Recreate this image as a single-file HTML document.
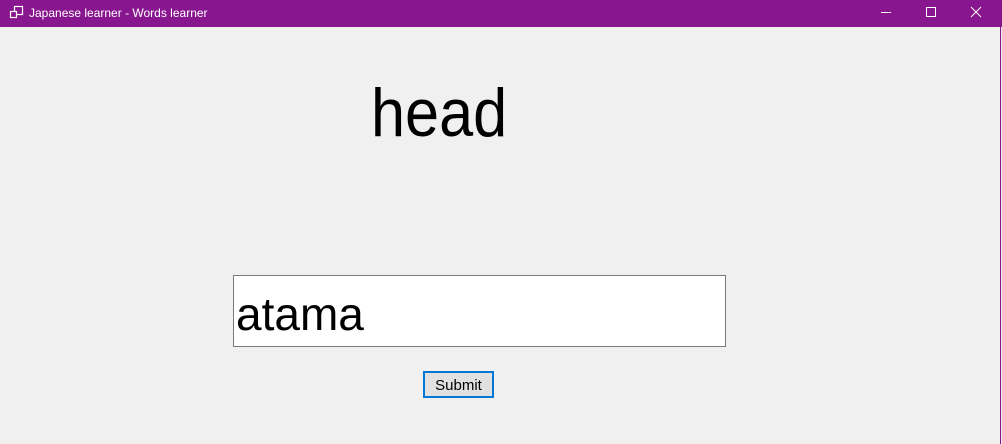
<!DOCTYPE html>
<html><head><style>
html,body{margin:0;padding:0;width:1002px;height:444px;overflow:hidden;background:#f0f0f0;font-family:"Liberation Sans",sans-serif}
.tb{position:absolute;left:0;top:0;width:1002px;height:27px;background:#88178f}
.rb{position:absolute;right:1px;top:27px;width:1px;height:417px;background:#88178f}
.title{position:absolute;left:29px;top:6px;color:#fff;font-size:12px}
.head{position:absolute;left:371px;top:73px;font-size:68px;line-height:80px;transform:scaleX(0.9);transform-origin:left;color:#000}
.inp{position:absolute;left:233px;top:275px;width:491px;height:70px;border:1px solid #7a7a7a;background:#fff}
.inp span{position:absolute;left:2px;top:12px;font-size:46px;line-height:52px}
.btn{position:absolute;left:423px;top:371px;width:67px;height:23px;border:2px solid #0078d7;background:#e1e1e1;font-size:15px;text-align:center;line-height:25px}
</style></head><body>
<div class="tb">
<svg style="position:absolute;left:9px;top:5px" width="16" height="16" viewBox="0 0 16 16" fill="none" stroke="#fff" stroke-width="1.2"><rect x="5.5" y="1.5" width="8" height="8"/><rect x="1.5" y="6.5" width="6" height="6" fill="#88178f"/></svg>
<div class="title">Japanese learner - Words learner</div>
<svg style="position:absolute;left:880px;top:6px" width="110" height="14" viewBox="0 0 110 14" stroke="#fff" stroke-width="1" fill="none"><line x1="1" y1="6.5" x2="11" y2="6.5"/><rect x="46.5" y="1.5" width="9" height="9"/><line x1="91" y1="1" x2="101" y2="11"/><line x1="101" y1="1" x2="91" y2="11"/></svg>
</div>
<div class="rb"></div>
<div class="head">head</div>
<div class="inp"><span>atama</span></div>
<div class="btn">Submit</div>
</body></html>
